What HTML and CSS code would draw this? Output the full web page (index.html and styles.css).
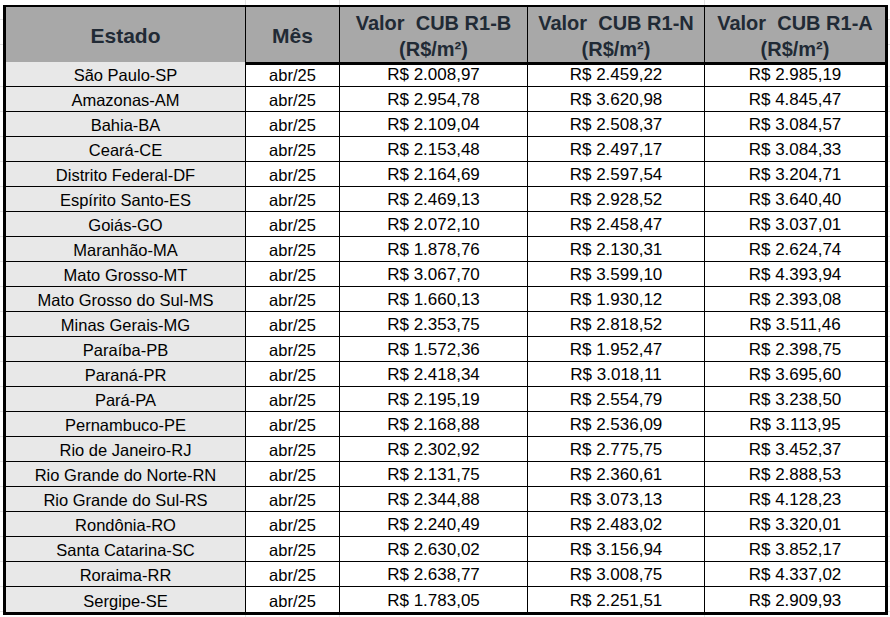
FILE: index.html
```html
<!DOCTYPE html>
<html lang="pt-BR">
<head>
<meta charset="utf-8">
<title>Valor CUB por Estado</title>
<link rel="stylesheet" href="styles.css">
</head>
<body>
<div class="sheet" role="table">
  <div class="row head" role="row">
    <div class="cell h state" role="columnheader"><span class="h-aptos">Estado</span></div>
    <div class="cell h" role="columnheader"><span class="h-aptos">Mês</span></div>
    <div class="cell h" role="columnheader"><span class="h-arial">Valor&nbsp; CUB R1-B<br>(R$/m²)</span></div>
    <div class="cell h" role="columnheader"><span class="h-arial">Valor&nbsp; CUB R1-N<br>(R$/m²)</span></div>
    <div class="cell h last" role="columnheader"><span class="h-arial">Valor&nbsp; CUB R1-A<br>(R$/m²)</span></div>
  </div>
  <div class="row" role="row"><div class="cell state">São Paulo-SP</div><div class="cell">abr/25</div><div class="cell num">R$ 2.008,97</div><div class="cell num">R$ 2.459,22</div><div class="cell num last">R$ 2.985,19</div></div>
  <div class="row" role="row"><div class="cell state">Amazonas-AM</div><div class="cell">abr/25</div><div class="cell num">R$ 2.954,78</div><div class="cell num">R$ 3.620,98</div><div class="cell num last">R$ 4.845,47</div></div>
  <div class="row" role="row"><div class="cell state">Bahia-BA</div><div class="cell">abr/25</div><div class="cell num">R$ 2.109,04</div><div class="cell num">R$ 2.508,37</div><div class="cell num last">R$ 3.084,57</div></div>
  <div class="row" role="row"><div class="cell state">Ceará-CE</div><div class="cell">abr/25</div><div class="cell num">R$ 2.153,48</div><div class="cell num">R$ 2.497,17</div><div class="cell num last">R$ 3.084,33</div></div>
  <div class="row" role="row"><div class="cell state">Distrito Federal-DF</div><div class="cell">abr/25</div><div class="cell num">R$ 2.164,69</div><div class="cell num">R$ 2.597,54</div><div class="cell num last">R$ 3.204,71</div></div>
  <div class="row" role="row"><div class="cell state">Espírito Santo-ES</div><div class="cell">abr/25</div><div class="cell num">R$ 2.469,13</div><div class="cell num">R$ 2.928,52</div><div class="cell num last">R$ 3.640,40</div></div>
  <div class="row" role="row"><div class="cell state">Goiás-GO</div><div class="cell">abr/25</div><div class="cell num">R$ 2.072,10</div><div class="cell num">R$ 2.458,47</div><div class="cell num last">R$ 3.037,01</div></div>
  <div class="row" role="row"><div class="cell state">Maranhão-MA</div><div class="cell">abr/25</div><div class="cell num">R$ 1.878,76</div><div class="cell num">R$ 2.130,31</div><div class="cell num last">R$ 2.624,74</div></div>
  <div class="row" role="row"><div class="cell state">Mato Grosso-MT</div><div class="cell">abr/25</div><div class="cell num">R$ 3.067,70</div><div class="cell num">R$ 3.599,10</div><div class="cell num last">R$ 4.393,94</div></div>
  <div class="row" role="row"><div class="cell state">Mato Grosso do Sul-MS</div><div class="cell">abr/25</div><div class="cell num">R$ 1.660,13</div><div class="cell num">R$ 1.930,12</div><div class="cell num last">R$ 2.393,08</div></div>
  <div class="row" role="row"><div class="cell state">Minas Gerais-MG</div><div class="cell">abr/25</div><div class="cell num">R$ 2.353,75</div><div class="cell num">R$ 2.818,52</div><div class="cell num last">R$ 3.511,46</div></div>
  <div class="row" role="row"><div class="cell state">Paraíba-PB</div><div class="cell">abr/25</div><div class="cell num">R$ 1.572,36</div><div class="cell num">R$ 1.952,47</div><div class="cell num last">R$ 2.398,75</div></div>
  <div class="row" role="row"><div class="cell state">Paraná-PR</div><div class="cell">abr/25</div><div class="cell num">R$ 2.418,34</div><div class="cell num">R$ 3.018,11</div><div class="cell num last">R$ 3.695,60</div></div>
  <div class="row" role="row"><div class="cell state">Pará-PA</div><div class="cell">abr/25</div><div class="cell num">R$ 2.195,19</div><div class="cell num">R$ 2.554,79</div><div class="cell num last">R$ 3.238,50</div></div>
  <div class="row" role="row"><div class="cell state">Pernambuco-PE</div><div class="cell">abr/25</div><div class="cell num">R$ 2.168,88</div><div class="cell num">R$ 2.536,09</div><div class="cell num last">R$ 3.113,95</div></div>
  <div class="row" role="row"><div class="cell state">Rio de Janeiro-RJ</div><div class="cell">abr/25</div><div class="cell num">R$ 2.302,92</div><div class="cell num">R$ 2.775,75</div><div class="cell num last">R$ 3.452,37</div></div>
  <div class="row" role="row"><div class="cell state">Rio Grande do Norte-RN</div><div class="cell">abr/25</div><div class="cell num">R$ 2.131,75</div><div class="cell num">R$ 2.360,61</div><div class="cell num last">R$ 2.888,53</div></div>
  <div class="row" role="row"><div class="cell state">Rio Grande do Sul-RS</div><div class="cell">abr/25</div><div class="cell num">R$ 2.344,88</div><div class="cell num">R$ 3.073,13</div><div class="cell num last">R$ 4.128,23</div></div>
  <div class="row" role="row"><div class="cell state">Rondônia-RO</div><div class="cell">abr/25</div><div class="cell num">R$ 2.240,49</div><div class="cell num">R$ 2.483,02</div><div class="cell num last">R$ 3.320,01</div></div>
  <div class="row" role="row"><div class="cell state">Santa Catarina-SC</div><div class="cell">abr/25</div><div class="cell num">R$ 2.630,02</div><div class="cell num">R$ 3.156,94</div><div class="cell num last">R$ 3.852,17</div></div>
  <div class="row" role="row"><div class="cell state">Roraima-RR</div><div class="cell">abr/25</div><div class="cell num">R$ 2.638,77</div><div class="cell num">R$ 3.008,75</div><div class="cell num last">R$ 4.337,02</div></div>
  <div class="row lastrow" role="row"><div class="cell state">Sergipe-SE</div><div class="cell">abr/25</div><div class="cell num">R$ 1.783,05</div><div class="cell num">R$ 2.251,51</div><div class="cell num last">R$ 2.909,93</div></div>
</div>
</body>
</html>
```
FILE: styles.css
```css
html, body {
  margin: 0;
  padding: 0;
}
body {
  width: 890px;
  height: 617px;
  overflow: hidden;
  background-color: #ffffff;
  background-image:
    linear-gradient(to right, transparent 245px, #e2e2e2 245px, #e2e2e2 246px, transparent 246px),
    linear-gradient(to right, transparent 339px, #e2e2e2 339px, #e2e2e2 340px, transparent 340px),
    linear-gradient(to right, transparent 704px, #e2e2e2 704px, #e2e2e2 705px, transparent 705px),
    repeating-linear-gradient(to bottom, transparent 0, transparent 24px, #e2e2e2 24px, #e2e2e2 25px);
  background-position: 0 0, 0 0, 0 0, 0 62px;
  font-family: "Liberation Sans", Arial, sans-serif;
  color: #000;
}
.sheet {
  box-sizing: border-box;
  margin: 5px 0 0 3px;
  width: 885px;
  border-style: solid;
  border-color: #000;
  border-width: 2px 3px 3px 3px;
  background: #fff;
  display: grid;
}
.row {
  display: grid;
  grid-template-columns: 240px 94px 188px 177px 180px;
  height: 25px;
}
.row.head {
  height: 55px;
}
.cell {
  box-sizing: border-box;
  border-right: 1px solid #000;
  border-bottom: 1px solid #000;
  display: flex;
  align-items: center;
  justify-content: center;
  font-size: 16.5px;
  line-height: 20px;
  white-space: nowrap;
  padding-top: 2px;
}
.cell.last {
  border-right: none;
}
.lastrow .cell {
  border-bottom: none;
}
.cell.state {
  background: #e8e8e8;
}
.cell.num {
  font-size: 17px;
}
.cell.h {
  background: #a8a8a8;
  border-bottom: 3px solid #000;
  color: #212a35;
  font-weight: bold;
  text-align: center;
  padding-top: 3px;
}
.h-aptos {
  font-size: 21px;
  line-height: 24px;
}
.h-arial {
  font-size: 20px;
  line-height: 26px;
}
```
